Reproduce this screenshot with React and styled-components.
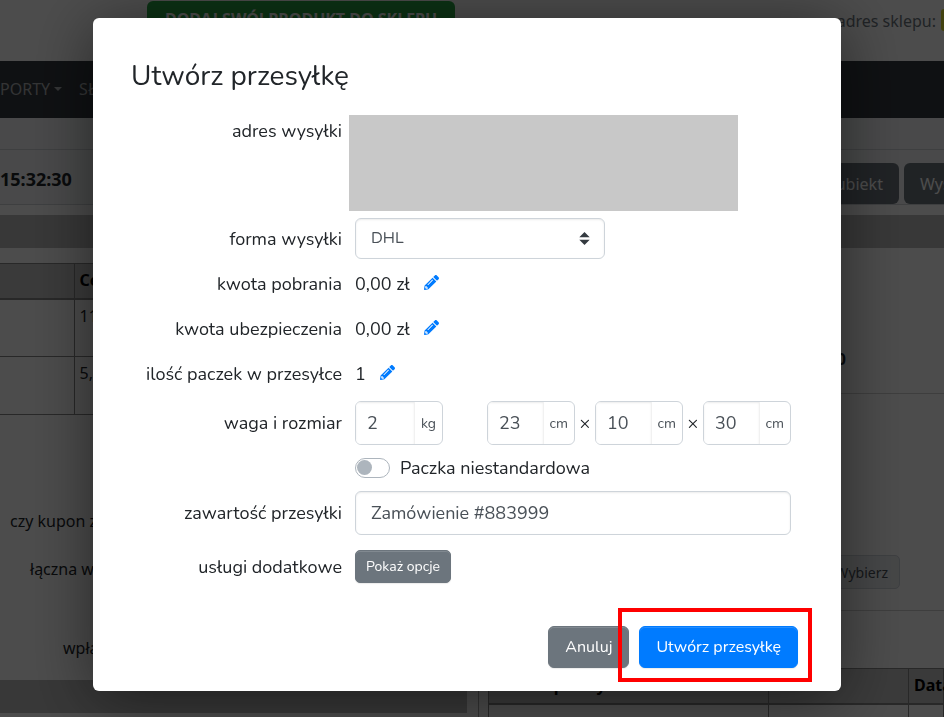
import React, { useState } from "react";
import styled, { createGlobalStyle } from "styled-components";
import { FaPencilAlt } from "react-icons/fa";

const App = () => {
  const [carrier, setCarrier] = useState("DHL");
  const [custom, setCustom] = useState(false);
  const [content, setContent] = useState("Zamówienie #883999");

  return (
    <>
      <GlobalStyle />
      <OrderPage />
      <Backdrop>
        <Modal role='dialog' aria-modal='true' aria-labelledby='modal-title'>
          <Title id='modal-title'>Utwórz przesyłkę</Title>
          <AddressRow>
            <AddressLabel>adres wysyłki</AddressLabel>
            <AddressBox />
          </AddressRow>
          <Row $top={7}>
            <Label as='label' htmlFor='carrier'>
              forma wysyłki
            </Label>
            <SelectWrap>
              <Select
                id='carrier'
                value={carrier}
                onChange={(e) => setCarrier(e.target.value)}
              >
                <option>DHL</option>
                <option>DPD</option>
                <option>InPost</option>
              </Select>
              <SelectArrows viewBox='0 0 4 5' aria-hidden='true'>
                <path d='M2 0L0 2h4zm0 5L0 3h4z' />
              </SelectArrows>
            </SelectWrap>
          </Row>
          <EditableRow top={8} label='kwota pobrania' value='0,00 zł' />
          <EditableRow top={12} label='kwota ubezpieczenia' value='0,00 zł' />
          <EditableRow top={12} label='ilość paczek w przesyłce' value='1' />
          <Row $top={11}>
            <Label>waga i rozmiar</Label>
            <SizeGroup>
              <UnitField label='waga' value='2' unit='kg' />
              <Dimensions>
                <UnitField label='długość' value='23' unit='cm' />
                <Times>×</Times>
                <UnitField label='szerokość' value='10' unit='cm' />
                <Times>×</Times>
                <UnitField label='wysokość' value='30' unit='cm' />
              </Dimensions>
            </SizeGroup>
          </Row>
          <Row $top={6}>
            <span />
            <SwitchLabel>
              <Switch
                type='checkbox'
                checked={custom}
                onChange={(e) => setCustom(e.target.checked)}
              />
              Paczka niestandardowa
            </SwitchLabel>
          </Row>
          <Row $top={7}>
            <Label as='label' htmlFor='content'>
              zawartość przesyłki
            </Label>
            <TextInput
              id='content'
              value={content}
              onChange={(e) => setContent(e.target.value)}
            />
          </Row>
          <Row $top={15}>
            <Label>usługi dodatkowe</Label>
            <div>
              <SmallButton type='button'>Pokaż opcje</SmallButton>
            </div>
          </Row>
          <Footer>
            <Button type='button'>Anuluj</Button>
            <Highlight>
              <Button type='button' $primary>
                Utwórz przesyłkę
              </Button>
            </Highlight>
          </Footer>
        </Modal>
      </Backdrop>
    </>
  );
};

export default App;

const EditableRow = ({ top, label, value }) => (
  <Row $top={top}>
    <Label>{label}</Label>
    <Value>
      {value}
      <EditButton type='button' aria-label={`Edytuj: ${label}`}>
        <FaPencilAlt size={15} />
      </EditButton>
    </Value>
  </Row>
);

const UnitField = ({ label, value, unit }) => {
  const [current, setCurrent] = useState(value);

  return (
    <InputGroup>
      <UnitInput
        aria-label={label}
        value={current}
        onChange={(e) => setCurrent(e.target.value)}
      />
      <Unit>{unit}</Unit>
    </InputGroup>
  );
};

const OrderPage = () => (
  <Page aria-hidden='true'>
    <TopBar>
      <GreenButton type='button'>DODAJ SWÓJ PRODUKT DO SKLEPU</GreenButton>
      <ShopAddress>
        adres sklepu: <Badge />
      </ShopAddress>
    </TopBar>
    <Nav>
      <NavLink href='#raporty'>
        PORTY
        <Caret />
      </NavLink>
      <NavLink href='#slowniki'>SŁOWNIKI</NavLink>
    </Nav>
    <SubBar />
    <OrderHeader>
      <strong>15:32:30</strong>
      <PageButtons>
        <PageButton type='button'>Subiekt</PageButton>
        <PageButton type='button'>Wyślij</PageButton>
      </PageButtons>
    </OrderHeader>
    <SectionBar />
    <Columns>
      <LeftColumn>
        <ProductTable>
          <thead>
            <tr>
              <th />
              <th>Cena</th>
            </tr>
          </thead>
          <tbody>
            <tr>
              <td />
              <td>11,00</td>
            </tr>
            <tr>
              <td />
              <td>5,00</td>
            </tr>
          </tbody>
        </ProductTable>
        <Details>
          <dt>czy kupon zniżkowy</dt>
          <dt>łączna waga</dt>
          <dt>wpłata</dt>
        </Details>
        <BottomBar />
      </LeftColumn>
      <RightColumn>
        <Total>0,00</Total>
        <ChooseRow>
          <ChooseButton type='button'>Wybierz</ChooseButton>
        </ChooseRow>
        <ShipmentTable>
          <thead>
            <tr>
              <th>Numer przesyłki</th>
              <th />
              <th>Data</th>
            </tr>
          </thead>
          <tbody>
            <tr>
              <td />
              <td />
              <td />
            </tr>
          </tbody>
        </ShipmentTable>
      </RightColumn>
    </Columns>
  </Page>
);

const GlobalStyle = createGlobalStyle`
  * {
    box-sizing: border-box;
  }

  body {
    margin: 0;
    overflow: hidden;
    background: #ffffff;
    color: #212529;
    font-family: "Noto Sans", sans-serif;
    font-size: 16px;
    line-height: 24px;
  }

  button,
  input,
  select {
    font-family: inherit;
  }
`;

const Backdrop = styled.div`
  position: fixed;
  inset: 0;
  overflow: hidden;
  padding: 18px 103px 24px 93px;
  background: rgba(0, 0, 0, 0.7);
`;

const Modal = styled.section`
  padding: 40px 43px 23px 38px;
  border-radius: 6px;
  background: #ffffff;
  box-shadow: 0 8px 64px rgba(0, 0, 0, 0.5);
  font-family: Nunito, Lato, sans-serif;
  font-size: 18px;
`;

const Title = styled.h1`
  margin: 0 0 21px;
  font-size: 28px;
  font-weight: 400;
  line-height: 36px;
`;

const Row = styled.div`
  display: grid;
  grid-template-columns: 211px minmax(0, 1fr);
  column-gap: 13px;
  align-items: center;
  min-height: 33px;
  margin-top: ${(props) => props.$top}px;
  padding-right: 7px;
`;

const AddressRow = styled(Row)`
  column-gap: 7px;
  align-items: start;
  margin-top: 0;
  padding-right: 60px;
`;

const Label = styled.span`
  text-align: right;
`;

const AddressLabel = styled(Label)`
  line-height: 32px;
`;

const AddressBox = styled.div`
  height: 96px;
  background: #c8c8c8;
`;

const SelectWrap = styled.div`
  position: relative;
  width: 250px;
`;

const Select = styled.select`
  display: block;
  width: 100%;
  height: 41px;
  padding: 0 15px 2px;
  border: 1px solid #ced4da;
  border-radius: 6px;
  appearance: none;
  background: #ffffff;
  box-shadow: inset 0 1px 2px rgba(0, 0, 0, 0.08);
  color: #495057;
  font-size: 16px;
`;

const SelectArrows = styled.svg`
  position: absolute;
  top: 14px;
  right: 15px;
  width: 11px;
  height: 13px;
  fill: #343a40;
  pointer-events: none;
`;

const Value = styled.div`
  display: flex;
  align-items: center;
  gap: 14px;
`;

const EditButton = styled.button`
  display: flex;
  padding: 0 0 2px;
  border: none;
  background: transparent;
  color: #007bff;
  cursor: pointer;
`;

const SizeGroup = styled.div`
  display: flex;
  justify-content: space-between;
`;

const Dimensions = styled.div`
  display: flex;
  align-items: center;
`;

const Times = styled.span`
  width: 20px;
  text-align: center;
`;

const InputGroup = styled.div`
  display: flex;
  width: 88px;
  height: 44px;
  border: 1px solid #ced4da;
  border-radius: 6px;
  overflow: hidden;
`;

const UnitInput = styled.input`
  flex: 1;
  min-width: 0;
  padding: 0 11px;
  border: none;
  box-shadow: inset 0 1px 2px rgba(0, 0, 0, 0.08);
  color: #495057;
  font-size: 18px;
`;

const Unit = styled.span`
  padding: 0 6px;
  border-left: 1px solid #f1f1f1;
  color: #495057;
  font-size: 14px;
  line-height: 43px;
`;

const SwitchLabel = styled.label`
  display: flex;
  align-items: center;
  gap: 10px;
`;

const Switch = styled.input`
  display: flex;
  align-items: center;
  width: 35px;
  height: 20px;
  margin: 0;
  padding: 0 1px;
  border: 1px solid #adb5bd;
  border-radius: 10px;
  appearance: none;
  background: #ffffff;

  &::before {
    content: "";
    width: 15px;
    height: 15px;
    border-radius: 50%;
    background: #adb5bd;
  }

  &:checked {
    justify-content: flex-end;
    background: #007bff;
  }
`;

const TextInput = styled.input`
  width: 100%;
  height: 44px;
  padding: 0 15px;
  border: 1px solid #ced4da;
  border-radius: 6px;
  box-shadow: inset 0 1px 2px rgba(0, 0, 0, 0.08);
  color: #495057;
  font-size: 18px;
`;

const Button = styled.button`
  display: block;
  height: 42px;
  padding: 0 16px;
  border: 1px solid ${(props) => (props.$primary ? "#007bff" : "#6c757d")};
  border-radius: 6px;
  background: ${(props) => (props.$primary ? "#007bff" : "#6c757d")};
  box-shadow:
    inset 0 1px 0 rgba(255, 255, 255, 0.15),
    0 1px 1px rgba(0, 0, 0, 0.08);
  color: #ffffff;
  font-size: 16px;
  cursor: pointer;
`;

const SmallButton = styled(Button)`
  height: 33px;
  padding: 0 10px;
  border-radius: 5px;
  font-size: 14px;
`;

const Footer = styled.footer`
  display: flex;
  justify-content: flex-end;
  gap: 10px;
  margin-top: 43px;
`;

const Highlight = styled.div`
  position: relative;

  &::after {
    content: "";
    position: absolute;
    inset: -18px -14px -14px -21px;
    border: 4px solid #ff0000;
    pointer-events: none;
  }
`;

const Page = styled.main`
  height: 100vh;
  overflow: hidden;
`;

const TopBar = styled.header`
  display: flex;
  align-items: flex-start;
  justify-content: space-between;
  height: 61px;
  padding: 1px 0 0 147px;
`;

const GreenButton = styled.button`
  height: 36px;
  padding: 0 18px;
  border: none;
  border-radius: 6px;
  background: #28a745;
  color: #ffffff;
  font-size: 16px;
  font-weight: 700;
`;

const ShopAddress = styled.span`
  display: flex;
  gap: 5px;
  padding-top: 8px;
  color: #6c757d;
`;

const Badge = styled.span`
  width: 3px;
  height: 22px;
  border-radius: 6px 0 0 6px;
  background: #dddd33;
`;

const Nav = styled.nav`
  display: flex;
  align-items: center;
  gap: 17px;
  height: 57px;
  padding-bottom: 2px;
  background: #343a40;
`;

const NavLink = styled.a`
  display: flex;
  align-items: center;
  gap: 4px;
  color: #adb0b3;
  text-decoration: none;
`;

const Caret = styled.span`
  border-top: 4px solid;
  border-right: 4px solid transparent;
  border-left: 4px solid transparent;
`;

const SubBar = styled.div`
  height: 32px;
  border-bottom: 1px solid #d0d4d8;
  background: #f3f5f7;
`;

const OrderHeader = styled.header`
  display: flex;
  align-items: center;
  justify-content: space-between;
  height: 55px;
  padding-top: 4px;
  border-bottom: 1px solid #d0d4d8;
  background: #f3f5f7;
  font-size: 18px;
`;

const PageButtons = styled.div`
  display: flex;
  align-self: flex-end;
  gap: 5px;
  margin-right: -35px;
`;

const PageButton = styled.button`
  height: 41px;
  padding: 0 16px;
  border: none;
  border-radius: 6px;
  background: #6c757d;
  color: #ffffff;
  font-size: 16px;
`;

const SectionBar = styled.div`
  height: 33px;
  margin: 10px 0 15px;
  background: #bbbbbb;
`;

const Columns = styled.div`
  display: grid;
  grid-template-columns: 479fr 456fr;
  column-gap: 9px;
`;

const LeftColumn = styled.div`
  padding-right: 11px;
  border-right: 1px solid #aaaaaa;
`;

const Table = styled.table`
  width: 100%;
  border-collapse: collapse;
  table-layout: fixed;

  th,
  td {
    padding: 4px 5px;
    border: 1px solid #888888;
    text-align: left;
    vertical-align: top;
  }

  th {
    height: 35px;
    border-bottom-width: 2px;
    background: #c4c4c4;
    color: #000000;
  }

  th:first-child,
  td:first-child {
    border-left: none;
  }
`;

const ProductTable = styled(Table)`
  th:first-child {
    width: 74px;
  }

  td {
    height: 58px;
  }
`;

const Details = styled.dl`
  display: grid;
  grid-template-columns: 157px;
  gap: 24px;
  height: 265px;
  margin: 0;
  padding-top: 94px;
  align-content: start;
  white-space: nowrap;

  dt:first-child {
    padding-left: 10px;
  }

  dt:nth-child(2) {
    padding-left: 30px;
  }

  dt:last-child {
    padding: 31px 0 0 63px;
  }
`;

const BottomBar = styled.div`
  height: 33px;
  background: #bbbbbb;
`;

const RightColumn = styled.div`
  padding-top: 84px;
`;

const Total = styled.div`
  height: 47px;
  padding-left: 326px;
  border-bottom: 1px solid #d0d0d0;
  font-weight: 700;
`;

const ChooseRow = styled.div`
  display: flex;
  align-items: flex-end;
  justify-content: flex-end;
  height: 217px;
  padding: 0 44px 21px 0;
  border-bottom: 1px solid #d0d0d0;
`;

const ChooseButton = styled.button`
  height: 34px;
  padding: 0 11px;
  border: 1px solid #ced4da;
  border-radius: 5px;
  background: #e9ecef;
  color: #495057;
  font-size: 14px;
`;

const ShipmentTable = styled(Table)`
  margin-top: 57px;

  th:first-child,
  td:first-child {
    border-left: 1px solid #888888;
  }

  th:first-child {
    width: 280px;
  }

  th:nth-child(2) {
    width: 140px;
  }

  td {
    height: 40px;
  }
`;
